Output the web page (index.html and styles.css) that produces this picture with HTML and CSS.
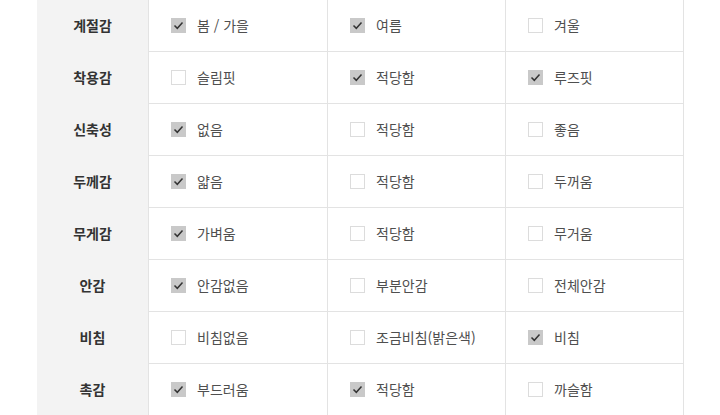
FILE: index.html
```html
<!DOCTYPE html>
<html lang="ko">
<head>
<meta charset="utf-8">
<link rel="stylesheet" href="styles.css">
</head>
<body>
<div class="wrap">
  <div class="grid">
    <div class="label">계절감</div>
    <div class="cell"><span class="box on"><svg viewBox="0 0 15 15"><polyline points="3.5,7.5 6.3,10.3 11.5,4.6"/></svg></span><span class="txt">봄 / 가을</span></div>
    <div class="cell"><span class="box on"><svg viewBox="0 0 15 15"><polyline points="3.5,7.5 6.3,10.3 11.5,4.6"/></svg></span><span class="txt">여름</span></div>
    <div class="cell"><span class="box"></span><span class="txt">겨울</span></div>

    <div class="label">착용감</div>
    <div class="cell"><span class="box"></span><span class="txt">슬림핏</span></div>
    <div class="cell"><span class="box on"><svg viewBox="0 0 15 15"><polyline points="3.5,7.5 6.3,10.3 11.5,4.6"/></svg></span><span class="txt">적당함</span></div>
    <div class="cell"><span class="box on"><svg viewBox="0 0 15 15"><polyline points="3.5,7.5 6.3,10.3 11.5,4.6"/></svg></span><span class="txt">루즈핏</span></div>

    <div class="label">신축성</div>
    <div class="cell"><span class="box on"><svg viewBox="0 0 15 15"><polyline points="3.5,7.5 6.3,10.3 11.5,4.6"/></svg></span><span class="txt">없음</span></div>
    <div class="cell"><span class="box"></span><span class="txt">적당함</span></div>
    <div class="cell"><span class="box"></span><span class="txt">좋음</span></div>

    <div class="label">두께감</div>
    <div class="cell"><span class="box on"><svg viewBox="0 0 15 15"><polyline points="3.5,7.5 6.3,10.3 11.5,4.6"/></svg></span><span class="txt">얇음</span></div>
    <div class="cell"><span class="box"></span><span class="txt">적당함</span></div>
    <div class="cell"><span class="box"></span><span class="txt">두꺼움</span></div>

    <div class="label">무게감</div>
    <div class="cell"><span class="box on"><svg viewBox="0 0 15 15"><polyline points="3.5,7.5 6.3,10.3 11.5,4.6"/></svg></span><span class="txt">가벼움</span></div>
    <div class="cell"><span class="box"></span><span class="txt">적당함</span></div>
    <div class="cell"><span class="box"></span><span class="txt">무거움</span></div>

    <div class="label">안감</div>
    <div class="cell"><span class="box on"><svg viewBox="0 0 15 15"><polyline points="3.5,7.5 6.3,10.3 11.5,4.6"/></svg></span><span class="txt">안감없음</span></div>
    <div class="cell"><span class="box"></span><span class="txt">부분안감</span></div>
    <div class="cell"><span class="box"></span><span class="txt">전체안감</span></div>

    <div class="label">비침</div>
    <div class="cell"><span class="box"></span><span class="txt">비침없음</span></div>
    <div class="cell"><span class="box"></span><span class="txt">조금비침(밝은색)</span></div>
    <div class="cell"><span class="box on"><svg viewBox="0 0 15 15"><polyline points="3.5,7.5 6.3,10.3 11.5,4.6"/></svg></span><span class="txt">비침</span></div>

    <div class="label">촉감</div>
    <div class="cell"><span class="box on"><svg viewBox="0 0 15 15"><polyline points="3.5,7.5 6.3,10.3 11.5,4.6"/></svg></span><span class="txt">부드러움</span></div>
    <div class="cell"><span class="box on"><svg viewBox="0 0 15 15"><polyline points="3.5,7.5 6.3,10.3 11.5,4.6"/></svg></span><span class="txt">적당함</span></div>
    <div class="cell"><span class="box"></span><span class="txt">까슬함</span></div>
  </div>
</div>
</body>
</html>
```
FILE: styles.css
```css
html, body {
  margin: 0;
  padding: 0;
  background: #fff;
  overflow: hidden;
}
body {
  font-family: "Noto Sans CJK KR", "Noto Sans", sans-serif;
}
.wrap {
  padding-left: 37px;
  margin-top: -1px;
}
.grid {
  display: grid;
  grid-template-columns: 112px 179px 178px 178px;
  grid-auto-rows: 52px;
  width: 647px;
  border-top: 1px solid #e3e3e3;
}
.label {
  background: #f3f3f3;
  border-right: 1px solid #e3e3e3;
  display: flex;
  align-items: center;
  justify-content: center;
  font-size: 14px;
  font-weight: 700;
  color: #333;
  padding-bottom: 2px;
}
.cell {
  border-right: 1px solid #e3e3e3;
  border-bottom: 1px solid #e3e3e3;
  display: flex;
  align-items: center;
  padding-left: 22px;
  gap: 11px;
}
.box {
  width: 13px;
  height: 13px;
  border: 1px solid #dcdcdc;
  background: #fff;
  flex: none;
  display: block;
}
.box.on {
  width: 15px;
  height: 15px;
  border: none;
  background: #c9c9c9;
}
.box svg {
  display: block;
  width: 15px;
  height: 15px;
  fill: none;
  stroke: #333;
  stroke-width: 1.5;
}
.txt {
  font-size: 14px;
  color: #4f4f4f;
  padding-bottom: 2px;
}
```
